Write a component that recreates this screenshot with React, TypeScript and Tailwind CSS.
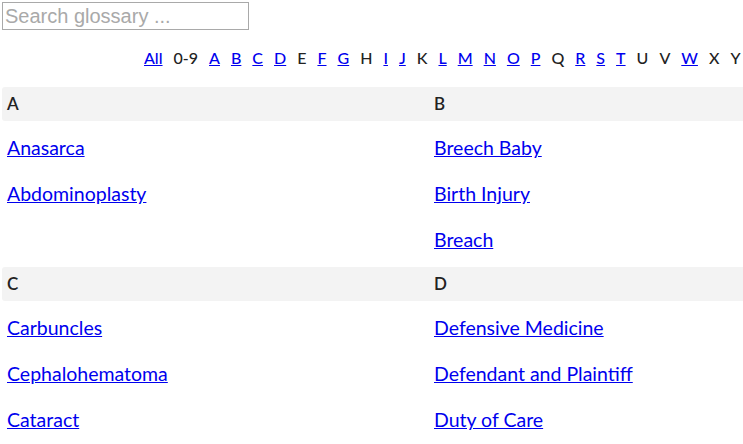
import React from "react";

const letters: [string, boolean][] = [
  ["All", true], ["0-9", false], ["A", true], ["B", true], ["C", true], ["D", true],
  ["E", false], ["F", true], ["G", true], ["H", false], ["I", true], ["J", true],
  ["K", false], ["L", true], ["M", true], ["N", true], ["O", true], ["P", true],
  ["Q", false], ["R", true], ["S", true], ["T", true], ["U", false], ["V", false],
  ["W", true], ["X", false], ["Y", false],
];

const sections: { title: string; terms: string[] }[][] = [
  [
    { title: "A", terms: ["Anasarca", "Abdominoplasty"] },
    { title: "B", terms: ["Breech Baby", "Birth Injury", "Breach"] },
  ],
  [
    { title: "C", terms: ["Carbuncles", "Cephalohematoma", "Cataract"] },
    { title: "D", terms: ["Defensive Medicine", "Defendant and Plaintiff", "Duty of Care"] },
  ],
];

function Section({ title, terms, first }: { title: string; terms: string[]; first: boolean }) {
  return (
    <div className="flex flex-col">
      <div
        className={
          "h-[34px] bg-[#f3f3f3] px-[5px] flex items-center text-[17px] font-semibold text-[#222] " +
          (first ? "rounded-l-[3px]" : "")
        }
      >
        {title}
      </div>
      <ul className="py-[4px] px-[5px]">
        {terms.map((t) => (
          <li key={t} className="h-[46px] flex items-center">
            <a href="#" className="text-[19.5px] text-[#0000ee] underline">
              {t}
            </a>
          </li>
        ))}
      </ul>
    </div>
  );
}

export default function App() {
  return (
    <div className="w-full overflow-hidden bg-white font-['Lato',sans-serif]">
      <div className="w-[856px] pl-[2px] pt-[2px]">
        <input
          type="text"
          placeholder="Search glossary ..."
          className="w-[247px] h-[28px] border border-[#a9a9a9] px-[2px] text-[20px] font-['Liberation_Sans',Arial,sans-serif] placeholder:text-[#a9a9a9] outline-none"
        />
        <div className="flex gap-[11px] pl-[142px] mt-[15px] h-[26px] items-center whitespace-nowrap text-[16px]">
          {letters.map(([l, link]) =>
            link ? (
              <a key={l} href="#" className="text-[#0000ee] underline font-medium">
                {l}
              </a>
            ) : (
              <span key={l} className="text-[#222] font-medium">
                {l}
              </span>
            )
          )}
        </div>
        <div className="mt-[16px]">
          {sections.map((row, i) => (
            <div key={i} className="grid grid-cols-[427px_427px]">
              {row.map((s, j) => (
                <Section key={s.title} title={s.title} terms={s.terms} first={j === 0} />
              ))}
            </div>
          ))}
        </div>
      </div>
    </div>
  );
}
